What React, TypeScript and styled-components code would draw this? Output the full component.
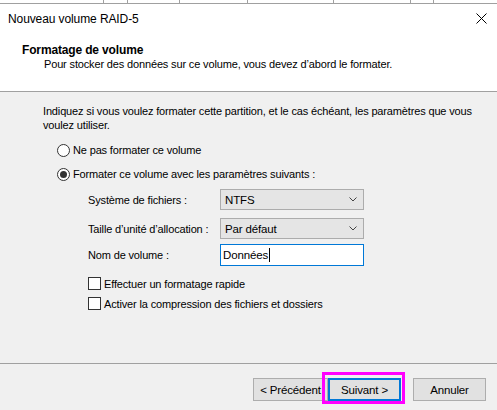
import React from 'react';
import styled, { createGlobalStyle, css } from 'styled-components';

const GlobalStyle = createGlobalStyle`
  html, body {
    margin: 0;
    padding: 0;
  }
  body {
    width: 497px;
    height: 410px;
    overflow: hidden;
    background: #f0f0f0;
    font-family: "Liberation Sans", Arial, sans-serif;
    color: #000;
  }
`;

const backdropCells = [104, 24, 52, 68, 86, 77, 23];

const fields = [
  { label: 'Système de fichiers :', kind: 'select', value: 'NTFS' },
  { label: 'Taille d’unité d’allocation :', kind: 'select', value: 'Par défaut' },
  { label: 'Nom de volume :', kind: 'input', value: 'Données' },
];

const Chevron = () => (
  <svg width="8" height="5" viewBox="0 0 8 5">
    <polyline points="0.5,0.5 4,4 7.5,0.5" fill="none" stroke="#444" strokeWidth="1" />
  </svg>
);

const App = () => {
  return (
    <Window>
      <GlobalStyle />
      <BackdropStrip>
        {backdropCells.map((w, i) => (
          <BackdropCell key={i} style={{ width: w }} />
        ))}
      </BackdropStrip>

      <TitleBar>
        <Title>Nouveau volume RAID-5</Title>
        <CloseButton>
          <svg width="11" height="11" viewBox="0 0 11 11">
            <path d="M0.5 0.5 L10.5 10.5 M10.5 0.5 L0.5 10.5" stroke="#000" strokeWidth="1" />
          </svg>
        </CloseButton>
      </TitleBar>

      <Header>
        <HeaderTitle>Formatage de volume</HeaderTitle>
        <HeaderSub>Pour stocker des données sur ce volume, vous devez d’abord le formater.</HeaderSub>
      </Header>

      <Body>
        <Intro>
          Indiquez si vous voulez formater cette partition, et le cas échéant, les paramètres que vous
          <br />
          voulez utiliser.
        </Intro>

        <RadioRow>
          <Radio />
          <span>Ne pas formater ce volume</span>
        </RadioRow>
        <RadioRow $spaced>
          <Radio $checked />
          <span>Formater ce volume avec les paramètres suivants :</span>
        </RadioRow>

        <FieldGrid>
          {fields.map((f) => (
            <React.Fragment key={f.label}>
              <FieldLabel>{f.label}</FieldLabel>
              {f.kind === 'select' ? (
                <Select>
                  <span>{f.value}</span>
                  <Chevron />
                </Select>
              ) : (
                <TextInput>
                  {f.value}
                  <Caret />
                </TextInput>
              )}
            </React.Fragment>
          ))}
        </FieldGrid>

        <CheckRow>
          <CheckBox />
          <span>Effectuer un formatage rapide</span>
        </CheckRow>
        <CheckRow $spaced>
          <CheckBox />
          <span>Activer la compression des fichiers et dossiers</span>
        </CheckRow>
      </Body>

      <Footer>
        <ButtonGroup>
          <Button>&lt; Précédent</Button>
          <Button $primary>
            Suivant &gt;
            <Highlight />
          </Button>
        </ButtonGroup>
        <Button>Annuler</Button>
      </Footer>
    </Window>
  );
};

export default App;

const Window = styled.div`
  width: 497px;
  height: 410px;
  display: flex;
  flex-direction: column;
  background: #f0f0f0;
  font-size: 11px;
  letter-spacing: -0.15px;
`;

const BackdropStrip = styled.div`
  height: 3px;
  display: flex;
  background: #fff;
  border-bottom: 1px solid #a0a0a0;
`;

const BackdropCell = styled.div`
  height: 100%;
  box-sizing: border-box;
  border-right: 1px solid #a0a0a0;
`;

const TitleBar = styled.div`
  height: 28px;
  display: flex;
  align-items: center;
  justify-content: space-between;
  padding: 0 10px 0 8px;
  background: #fff;
`;

const Title = styled.div`
  font-size: 12px;
  letter-spacing: -0.1px;
  padding-top: 1px;
`;

const CloseButton = styled.div`
  width: 11px;
  height: 11px;
  display: flex;
  margin-top: 1px;
`;

const Header = styled.div`
  height: 60px;
  box-sizing: border-box;
  padding: 11px 0 0 22px;
  background: #fff;
  border-bottom: 1px solid #a0a0a0;
`;

const HeaderTitle = styled.div`
  font-size: 12px;
  font-weight: bold;
  line-height: 14px;
  letter-spacing: -0.15px;
`;

const HeaderSub = styled.div`
  line-height: 14px;
  padding-left: 22px;
`;

const Body = styled.div`
  flex: 1;
  display: flex;
  flex-direction: column;
  padding: 12px 0 0 43px;
  border-bottom: 1px solid #a0a0a0;
`;

const Intro = styled.div`
  line-height: 14px;
`;

const RadioRow = styled.div<{ $spaced?: boolean }>`
  height: 16px;
  display: flex;
  align-items: center;
  gap: 3px;
  padding-left: 14px;
  margin-top: ${(p) => (p.$spaced ? 8 : 10)}px;
`;

const Radio = styled.div<{ $checked?: boolean }>`
  width: 13px;
  height: 13px;
  box-sizing: border-box;
  border: 1px solid #333;
  border-radius: 50%;
  background: #fff;
  display: flex;
  align-items: center;
  justify-content: center;

  ${(p) =>
    p.$checked &&
    css`
      &::after {
        content: '';
        width: 7px;
        height: 7px;
        border-radius: 50%;
        background: #333;
      }
    `};
`;

const FieldGrid = styled.div`
  display: grid;
  grid-template-columns: 132px 144px;
  grid-auto-rows: auto;
  row-gap: 8px;
  align-items: center;
  margin: 7px 0 0 45px;

  & > :nth-child(5),
  & > :nth-child(6) {
    margin-top: -3px;
  }
`;

const FieldLabel = styled.div`
  line-height: 14px;
`;

const Select = styled.div`
  height: 21px;
  box-sizing: border-box;
  display: flex;
  align-items: center;
  justify-content: space-between;
  padding: 0 6px 0 4px;
  background: #e5e5e5;
  border: 1px solid #acacac;
  font-size: 11.5px;
`;

const TextInput = styled.div`
  height: 22px;
  box-sizing: border-box;
  display: flex;
  align-items: center;
  padding-left: 2px;
  background: #fff;
  border: 1px solid #0078d7;
  font-size: 11.5px;
`;

const Caret = styled.span`
  width: 1px;
  height: 14px;
  margin-left: 1px;
  background: #000;
`;

const CheckRow = styled.div<{ $spaced?: boolean }>`
  height: 15px;
  display: flex;
  align-items: center;
  gap: 3px;
  padding-left: 45px;
  margin-top: ${(p) => (p.$spaced ? 5 : 10)}px;
`;

const CheckBox = styled.div`
  width: 13px;
  height: 13px;
  box-sizing: border-box;
  border: 1px solid #333;
  background: #fff;
`;

const Footer = styled.div`
  height: 46px;
  box-sizing: border-box;
  display: flex;
  align-items: flex-start;
  justify-content: flex-end;
  gap: 12px;
  padding: 14px 11px 0 0;
`;

const ButtonGroup = styled.div`
  display: flex;
`;

const Button = styled.div<{ $primary?: boolean }>`
  position: relative;
  width: 73px;
  height: 23px;
  box-sizing: border-box;
  display: flex;
  align-items: center;
  justify-content: center;
  background: #e1e1e1;
  border: 1px solid #adadad;
  font-size: 11.5px;

  &:first-child {
    width: 75px;
  }

  ${(p) =>
    p.$primary &&
    css`
      border: 2px solid #0078d7;
    `};
`;

const Highlight = styled.div`
  position: absolute;
  left: -8px;
  top: -8px;
  right: -6px;
  bottom: -5px;
  border: 3px solid #ff00ff;
  pointer-events: none;
`;
